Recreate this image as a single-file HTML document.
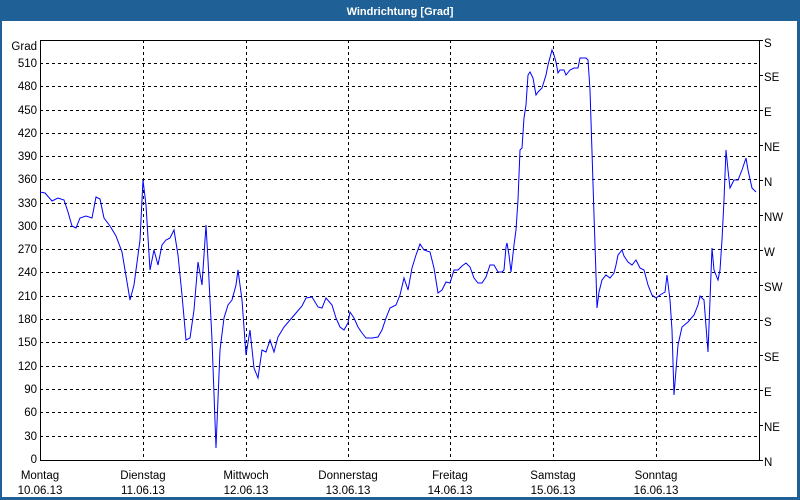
<!DOCTYPE html>
<html><head><meta charset="utf-8"><style>
html,body{margin:0;padding:0;background:#fff;}
body{width:800px;height:500px;overflow:hidden;position:relative;font-family:"Liberation Sans",sans-serif;}
</style></head><body>
<svg width="800" height="500" xmlns="http://www.w3.org/2000/svg" style="position:absolute;left:0;top:0" font-family="Liberation Sans, sans-serif" font-size="11.5">
<rect x="0" y="0" width="800" height="500" fill="#1f6196"/>
<rect x="2" y="21" width="795" height="476" fill="#fff"/>
<text x="400" y="15" fill="#fff" font-weight="bold" text-anchor="middle" font-size="11">Windrichtung [Grad]</text>
<g stroke="#000" stroke-dasharray="3,3" stroke-width="1">
<line x1="40" x2="760" y1="63.5" y2="63.5"/><line x1="40" x2="760" y1="86.5" y2="86.5"/><line x1="40" x2="760" y1="110.5" y2="110.5"/><line x1="40" x2="760" y1="133.5" y2="133.5"/><line x1="40" x2="760" y1="156.5" y2="156.5"/><line x1="40" x2="760" y1="179.5" y2="179.5"/><line x1="40" x2="760" y1="203.5" y2="203.5"/><line x1="40" x2="760" y1="226.5" y2="226.5"/><line x1="40" x2="760" y1="249.5" y2="249.5"/><line x1="40" x2="760" y1="272.5" y2="272.5"/><line x1="40" x2="760" y1="296.5" y2="296.5"/><line x1="40" x2="760" y1="319.5" y2="319.5"/><line x1="40" x2="760" y1="342.5" y2="342.5"/><line x1="40" x2="760" y1="366.5" y2="366.5"/><line x1="40" x2="760" y1="389.5" y2="389.5"/><line x1="40" x2="760" y1="412.5" y2="412.5"/><line x1="40" x2="760" y1="436.5" y2="436.5"/>
<line x1="143.5" x2="143.5" y1="40" y2="460"/><line x1="246.5" x2="246.5" y1="40" y2="460"/><line x1="348.5" x2="348.5" y1="40" y2="460"/><line x1="450.5" x2="450.5" y1="40" y2="460"/><line x1="553.5" x2="553.5" y1="40" y2="460"/><line x1="656.5" x2="656.5" y1="40" y2="460"/>
</g>
<rect x="40.5" y="40.5" width="719" height="420" fill="none" stroke="#000"/>
<g fill="#000" text-anchor="end">
<text x="37" y="50">Grad</text>
<text x="37" y="67">510</text><text x="37" y="90">480</text><text x="37" y="114">450</text><text x="37" y="137">420</text><text x="37" y="160">390</text><text x="37" y="183">360</text><text x="37" y="207">330</text><text x="37" y="230">300</text><text x="37" y="253">270</text><text x="37" y="276">240</text><text x="37" y="300">210</text><text x="37" y="323">180</text><text x="37" y="346">150</text><text x="37" y="370">120</text><text x="37" y="393">90</text><text x="37" y="416">60</text><text x="37" y="440">30</text><text x="37" y="463">0</text>
</g>
<g stroke="#000"><line x1="760" x2="763" y1="40.5" y2="40.5"/><line x1="760" x2="763" y1="75.5" y2="75.5"/><line x1="760" x2="763" y1="110.5" y2="110.5"/><line x1="760" x2="763" y1="145.5" y2="145.5"/><line x1="760" x2="763" y1="180.5" y2="180.5"/><line x1="760" x2="763" y1="215.5" y2="215.5"/><line x1="760" x2="763" y1="250.5" y2="250.5"/><line x1="760" x2="763" y1="285.5" y2="285.5"/><line x1="760" x2="763" y1="320.5" y2="320.5"/><line x1="760" x2="763" y1="355.5" y2="355.5"/><line x1="760" x2="763" y1="390.5" y2="390.5"/><line x1="760" x2="763" y1="425.5" y2="425.5"/><line x1="760" x2="763" y1="460.5" y2="460.5"/></g>
<g fill="#000">
<text x="764" y="47">S</text><text x="764" y="81">SE</text><text x="764" y="116">E</text><text x="764" y="151">NE</text><text x="764" y="186">N</text><text x="764" y="221">NW</text><text x="764" y="256">W</text><text x="764" y="291">SW</text><text x="764" y="326">S</text><text x="764" y="361">SE</text><text x="764" y="396">E</text><text x="764" y="431">NE</text><text x="764" y="466">N</text>
</g>
<g fill="#000" text-anchor="middle">
<text x="40" y="479">Montag</text><text x="40" y="494">10.06.13</text>
<text x="143" y="479">Dienstag</text><text x="143" y="494">11.06.13</text>
<text x="246" y="479">Mittwoch</text><text x="246" y="494">12.06.13</text>
<text x="348" y="479">Donnerstag</text><text x="348" y="494">13.06.13</text>
<text x="450" y="479">Freitag</text><text x="450" y="494">14.06.13</text>
<text x="553" y="479">Samstag</text><text x="553" y="494">15.06.13</text>
<text x="656" y="479">Sonntag</text><text x="656" y="494">16.06.13</text>
</g>
<polyline fill="none" stroke="#0000ff" stroke-width="1" points="40,192 45,193 52,201 58,198 64,200 68,212 72,226 76,228 80,218 86,216 92,218 96,197 100,199 104,218 110,226 116,236 122,252 126,276 130,300 134,285 140,240 143,180 146,205 150,270 154,250 158,265 162,245 166,240 170,238 174,230 178,255 182,295 186,340 190,338 194,310 198,262 202,285 206,225 208,260 212,340 216,448 220,350 224,318 228,305 232,300 236,285 238,270 242,300 246,355 250,330 254,368 258,378 262,350 266,352 270,340 274,352 278,337 284,327 290,320 296,313 302,306 306,298 312,297 318,307 322,308 326,298 332,305 336,318 340,327 344,330 348,323 350,312 354,318 358,327 362,333 366,338 372,338 378,337 382,330 386,318 390,308 396,305 400,295 404,278 408,290 412,268 416,255 420,244 424,250 430,252 434,268 438,293 442,290 446,282 450,283 454,270 458,270 462,266 466,263 470,267 474,278 478,283 482,283 486,277 490,265 494,265 498,272 502,272 504,270 506,247 507,243 509,255 511,272 514,245 516,230 518,200 520,150 522,148 524,118 526,105 528,75 530,72 533,78 536,95 538,92 542,88 546,75 548,65 552,50 554,55 556,62 558,73 560,70 564,70 566,75 570,70 574,68 578,68 580,58 583,58 586,58 588,60 590,90 592,152 594,215 596,275 597,308 599,292 602,280 606,275 610,278 614,273 616,265 618,255 622,250 624,256 628,262 632,265 636,260 640,268 644,270 648,285 652,295 656,298 660,295 665,292 667,275 670,300 672,330 674,395 678,345 682,327 688,322 694,315 698,305 700,296 704,300 708,352 712,248 714,270 716,275 718,280 720,270 722,240 724,200 726,150 728,170 730,188 734,180 738,180 742,170 746,158 748,170 752,188 756,192"/>
</svg>
</body></html>
